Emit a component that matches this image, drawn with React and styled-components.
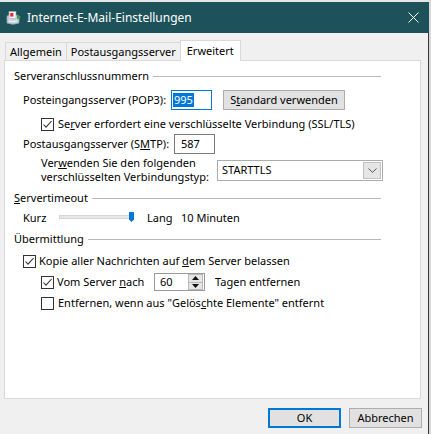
import styled, { createGlobalStyle } from 'styled-components';

const GlobalStyle = createGlobalStyle`
  html, body {
    margin: 0;
    padding: 0;
    background: #d8d8d8;
  }
  body {
    font-family: "Noto Sans", "Open Sans", sans-serif;
    font-size: 11px;
    color: #000;
  }
  u {
    text-underline-offset: 1px;
  }
`;

const Window = styled.div`
  width: 429px;
  height: 434px;
  display: flex;
  flex-direction: column;
  background: #f0f0f0;
  border-top: 2px solid #e6e6e6;
  box-sizing: border-box;
`;

const TitleBar = styled.div`
  height: 31px;
  flex: none;
  display: flex;
  align-items: center;
  padding-left: 5px;
  background: #1d525a;
  color: #fff;
`;

const Title = styled.span`
  margin-left: 5px;
  font-size: 12px;
  line-height: 16px;
`;

const CloseButton = styled.div`
  margin-left: auto;
  margin-right: 10px;
  display: flex;
`;

const Body = styled.div`
  flex: 1;
  display: flex;
  flex-direction: column;
  padding: 7px 7px 0 4px;
  border-right: 1px solid #3a3a3a;
`;

const TabRow = styled.div`
  display: flex;
  align-items: flex-end;
  height: 20px;
  padding-left: 1px;
`;

const Tab = styled.div`
  box-sizing: border-box;
  display: flex;
  align-items: center;
  height: ${(p) => (p.$active ? '21px' : '18px')};
  margin-bottom: ${(p) => (p.$active ? '-1px' : '0')};
  margin-left: ${(p) => (p.$first ? '0' : '-1px')};
  padding: 0 ${(p) => (p.$active ? '6px' : '4px')};
  background: ${(p) => (p.$active ? '#fff' : '#f0f0f0')};
  border: 1px solid #d9d9d9;
  border-bottom: none;
  position: relative;
  z-index: ${(p) => (p.$active ? 1 : 0)};
  line-height: 14px;
`;

const Panel = styled.div`
  box-sizing: border-box;
  height: 339px;
  background: #fff;
  border: 1px solid #d9d9d9;
  padding: 0 39px 0 9px;
  display: flex;
  flex-direction: column;
`;

const GroupHeader = styled.div`
  display: flex;
  align-items: center;
  gap: 4px;
  height: 16px;
  margin-top: ${(p) => p.$mt}px;
  line-height: 14px;
`;

const GroupLine = styled.div`
  flex: 1;
  height: 1px;
  background: #b8b8b8;
`;

const Row = styled.div`
  display: flex;
  align-items: center;
  height: ${(p) => p.$h}px;
  margin-top: ${(p) => p.$mt}px;
  padding-left: ${(p) => p.$indent}px;
  line-height: 14px;
`;

const Label = styled.span`
  flex: none;
  width: ${(p) => (p.$w ? `${p.$w}px` : 'auto')};
  white-space: nowrap;
  margin-left: ${(p) => p.$ml || 0}px;
`;

const TextBox = styled.div`
  box-sizing: border-box;
  width: 41px;
  height: 20px;
  flex: none;
  display: flex;
  align-items: center;
  background: #fff;
  border: 1px solid ${(p) => (p.$focused ? '#0078d7' : '#7a7a7a')};
  padding-left: ${(p) => (p.$focused ? '1px' : '6px')};
`;

const Selection = styled.span`
  background: #0078d7;
  color: #fff;
  padding: 0 1px;
  line-height: 14px;
`;

const PushButton = styled.button`
  box-sizing: border-box;
  width: ${(p) => p.$w}px;
  height: 20px;
  flex: none;
  margin: 0 0 0 ${(p) => p.$ml || 0}px;
  padding: 0;
  background: #e1e1e1;
  border: ${(p) => (p.$default ? '2px solid #0078d7' : '1px solid #adadad')};
  font: inherit;
  color: #000;
  line-height: 14px;
`;

const CheckBox = styled.span`
  box-sizing: border-box;
  width: 13px;
  height: 13px;
  flex: none;
  display: flex;
  background: #fff;
  border: 1px solid #333;
  margin-right: ${(p) => p.$gap}px;
`;

const Select = styled.div`
  box-sizing: border-box;
  width: 166px;
  height: 21px;
  flex: none;
  display: flex;
  align-items: center;
  background: #fff;
  border: 1px solid #acacac;
  padding-left: 4px;
`;

const SelectValue = styled.span`
  flex: 1;
`;

const DropButton = styled.span`
  box-sizing: border-box;
  width: 18px;
  height: 17px;
  margin-right: 1px;
  display: flex;
  align-items: center;
  justify-content: center;
  background: #e5e5e5;
  border: 1px solid #c2c2c2;
`;

const TwoLineLabel = styled.span`
  width: 176px;
  flex: none;
  line-height: 14px;
`;

const Track = styled.div`
  position: relative;
  width: 74px;
  height: 16px;
  flex: none;
`;

const TrackLine = styled.div`
  box-sizing: border-box;
  margin-top: 5px;
  width: 72px;
  height: 4px;
  background: #e7e7e7;
  border: 1px solid #d6d6d6;
`;

const Thumb = styled.svg`
  position: absolute;
  left: 70px;
  top: 2px;
`;

const Spinner = styled.div`
  box-sizing: border-box;
  width: 51px;
  height: 18px;
  flex: none;
  display: flex;
  align-items: center;
  background: #fff;
  border: 1px solid #9a9a9a;
  padding-left: 5px;
`;

const SpinValue = styled.span`
  flex: 1;
`;

const SpinButtons = styled.div`
  display: flex;
  flex-direction: column;
  width: 15px;
  height: 16px;
  margin-right: 1px;
`;

const SpinHalf = styled.span`
  box-sizing: border-box;
  flex: 1;
  display: flex;
  align-items: center;
  justify-content: center;
  background: #e6e6e6;
  border: 1px solid #b9b9b9;
  margin-top: ${(p) => (p.$down ? '-1px' : '0')};
`;

const Footer = styled.div`
  display: flex;
  justify-content: flex-end;
  gap: 8px;
  margin-top: 9px;
  margin-right: -1px;
`;

const Check = () => (
  <svg width="11" height="11" viewBox="0 0 11 11">
    <path d="M1.5 5.5 L4 8.2 L9.6 2" fill="none" stroke="#333" strokeWidth="1.1" />
  </svg>
);

const AppIcon = () => (
  <svg width="17" height="16" viewBox="0 0 17 16">
    <path d="M2 6 Q8 3 14 6 L14 13 Q8 15.5 2 13 Z" fill="#c9d3de" stroke="#8fa0b3" strokeWidth="0.8" />
    <rect x="4" y="1.5" width="7" height="7" fill="#f4f6f8" stroke="#9aa8b6" strokeWidth="0.6" />
    <rect x="5.2" y="3" width="3.2" height="3.6" fill="#e03030" />
    <path d="M12 4.5 L16 7 L12 9.5 Z" fill="#2fa84f" />
    <path d="M4 11 Q8 12.5 12 11" fill="none" stroke="#eef2f6" strokeWidth="1" />
  </svg>
);

const CloseIcon = () => (
  <svg width="11" height="11" viewBox="0 0 11 11">
    <path d="M0.5 0.5 L10.5 10.5 M10.5 0.5 L0.5 10.5" stroke="#fff" strokeWidth="1" />
  </svg>
);

const Chevron = () => (
  <svg width="9" height="5" viewBox="0 0 9 5">
    <path d="M0.5 0.5 L4.5 4.3 L8.5 0.5" fill="none" stroke="#555" strokeWidth="1" />
  </svg>
);

const Arrow = ({ down }) => (
  <svg width="7" height="4" viewBox="0 0 7 4">
    <path d={down ? 'M0 0 H7 L3.5 4 Z' : 'M0 4 H7 L3.5 0 Z'} fill="#111" />
  </svg>
);

const App = () => (
  <>
    <GlobalStyle />
    <Window>
      <TitleBar>
        <AppIcon />
        <Title>Internet-E-Mail-Einstellungen</Title>
        <CloseButton>
          <CloseIcon />
        </CloseButton>
      </TitleBar>
      <Body>
        <TabRow>
          <Tab $first>Allgemein</Tab>
          <Tab>Postausgangsserver</Tab>
          <Tab $active>Erweitert</Tab>
        </TabRow>
        <Panel>
          <GroupHeader $mt={7}>
            <span>Serveranschlussnummern</span>
            <GroupLine />
          </GroupHeader>

          <Row $h={20} $mt={6} $indent={9}>
            <Label $w={148}>Posteingangsserver (POP3):</Label>
            <TextBox $focused>
              <Selection>995</Selection>
            </TextBox>
            <PushButton $w={122} $ml={11}>
              S<u>t</u>andard verwenden
            </PushButton>
          </Row>

          <Row $h={16} $mt={6} $indent={27}>
            <CheckBox $gap={4}>
              <Check />
            </CheckBox>
            <Label>
              Se<u>r</u>ver erfordert eine verschlüsselte Verbindung (SSL/TLS)
            </Label>
          </Row>

          <Row $h={20} $mt={2} $indent={9}>
            <Label $w={151}>
              Postausgangsserver (S<u>M</u>TP):
            </Label>
            <TextBox>587</TextBox>
          </Row>

          <Row $h={28} $mt={2} $indent={27}>
            <TwoLineLabel>
              Ver<u>w</u>enden Sie den folgenden
              <br />
              verschlüsselten Verbindungstyp:
            </TwoLineLabel>
            <Select>
              <SelectValue>STARTTLS</SelectValue>
              <DropButton>
                <Chevron />
              </DropButton>
            </Select>
          </Row>

          <GroupHeader $mt={6}>
            <span>
              <u>S</u>ervertimeout
            </span>
            <GroupLine />
          </GroupHeader>

          <Row $h={16} $mt={4} $indent={9}>
            <Label $w={36}>Kurz</Label>
            <Track>
              <TrackLine />
              <Thumb width="6" height="10" viewBox="0 0 6 10">
                <path d="M0 0 H5 V7.5 L2.5 10 L0 7.5 Z" fill="#0078d7" />
              </Thumb>
            </Track>
            <Label $w={34} $ml={14}>Lang</Label>
            <Label>10 Minuten</Label>
          </Row>

          <GroupHeader $mt={5}>
            <span>Übermittlung</span>
            <GroupLine />
          </GroupHeader>

          <Row $h={16} $mt={6} $indent={9}>
            <CheckBox $gap={3}>
              <Check />
            </CheckBox>
            <Label>
              Kopie aller Nachrichten auf <u>d</u>em Server belassen
            </Label>
          </Row>

          <Row $h={18} $mt={4} $indent={27}>
            <CheckBox $gap={3}>
              <Check />
            </CheckBox>
            <Label $w={97}>
              Vom Server <u>n</u>ach
            </Label>
            <Spinner>
              <SpinValue>60</SpinValue>
              <SpinButtons>
                <SpinHalf>
                  <Arrow />
                </SpinHalf>
                <SpinHalf $down>
                  <Arrow down />
                </SpinHalf>
              </SpinButtons>
            </Spinner>
            <Label $ml={10}>Tagen entfernen</Label>
          </Row>

          <Row $h={16} $mt={4} $indent={27}>
            <CheckBox $gap={4} />
            <Label>
              Entfernen, wenn aus "Gelös<u>c</u>hte Elemente" entfernt
            </Label>
          </Row>
        </Panel>
        <Footer>
          <PushButton $w={73} $default>
            OK
          </PushButton>
          <PushButton $w={73}>Abbrechen</PushButton>
        </Footer>
      </Body>
    </Window>
  </>
);

export default App;
